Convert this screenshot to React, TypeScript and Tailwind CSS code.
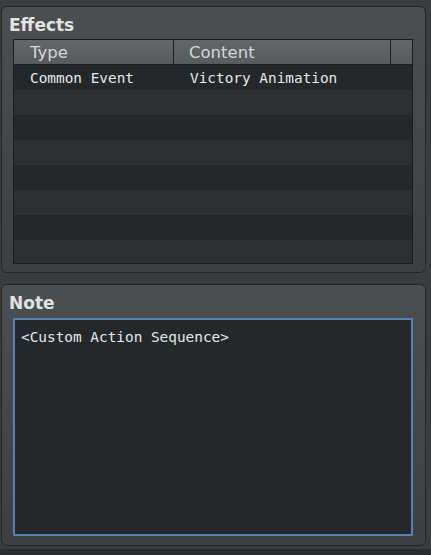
const rows = [
  { type: "Common Event", content: "Victory Animation" },
  {}, {}, {}, {}, {}, {}, {},
]

export default function App() {
  return (
    <div className="w-[431px] h-[555px] bg-[#3a3d40] flex flex-col overflow-hidden">
      <div className="flex flex-col gap-[11px] pl-[1px] pr-[5px] pt-[6px]">
        {/* ===== EFFECTS ===== */}
        <div className="h-[267px] rounded-[6px] border border-[#232527] bg-gradient-to-b from-[#4c4f52] to-[#3d4043] pl-[11px] pr-[12px] pt-[8px]">
          <div className="text-[17px] leading-[20px] font-bold text-[#e2e2e2] -ml-[4px]" style={{ fontFamily: '"DejaVu Sans", sans-serif' }}>
            Effects
          </div>
          <div className="mt-[4px] h-[225px] border border-[#1b1d1f] bg-[#2d3033] overflow-hidden flex flex-col">
            <div className="flex h-[25px] shrink-0 border-b border-[#1b1d1f] bg-gradient-to-b from-[#63676a] to-[#575b5e] text-[16.5px] leading-[26px] text-[#d6d6d6]" style={{ fontFamily: '"DejaVu Sans", sans-serif' }}>
              <div className="w-[160px] pl-[16px] border-r border-[#1b1d1f]">Type</div>
              <div className="w-[217px] pl-[15px] border-r border-[#1b1d1f]">Content</div>
              <div className="flex-1"></div>
            </div>
            {rows.map((r: any, i: number) => (
              <div
                key={i}
                className={`flex h-[25px] shrink-0 text-[14.4px] leading-[26px] text-[#e4e8ec] ${i % 2 === 0 ? "bg-[#25282b]" : "bg-[#2d3033]"}`}
                style={{ fontFamily: '"DejaVu Sans Mono", monospace' }}
              >
                <div className="w-[161px] pl-[16px]">{r.type}</div>
                <div className="pl-[15px]">{r.content}</div>
              </div>
            ))}
          </div>
        </div>

        {/* ===== NOTE ===== */}
        <div className="h-[262px] rounded-[6px] border border-[#232527] bg-gradient-to-b from-[#4c4f52] to-[#3d4043] pl-[11px] pr-[12px] pt-[8px]">
          <div className="text-[17px] leading-[20px] font-bold text-[#e2e2e2] -ml-[4px]" style={{ fontFamily: '"DejaVu Sans", sans-serif' }}>
            Note
          </div>
          <div
            className="mt-[5px] h-[218px] border-2 border-[#5582b4] bg-[#25282b] px-[6px] pt-[7px] text-[14.4px] leading-[20px] text-[#e4e8ec]"
            style={{ fontFamily: '"DejaVu Sans Mono", monospace' }}
          >
            {"<Custom Action Sequence>"}
          </div>
        </div>
      </div>
      <div className="flex-1 mt-[3px] bg-[#2a2c2e]"></div>
    </div>
  )
}
